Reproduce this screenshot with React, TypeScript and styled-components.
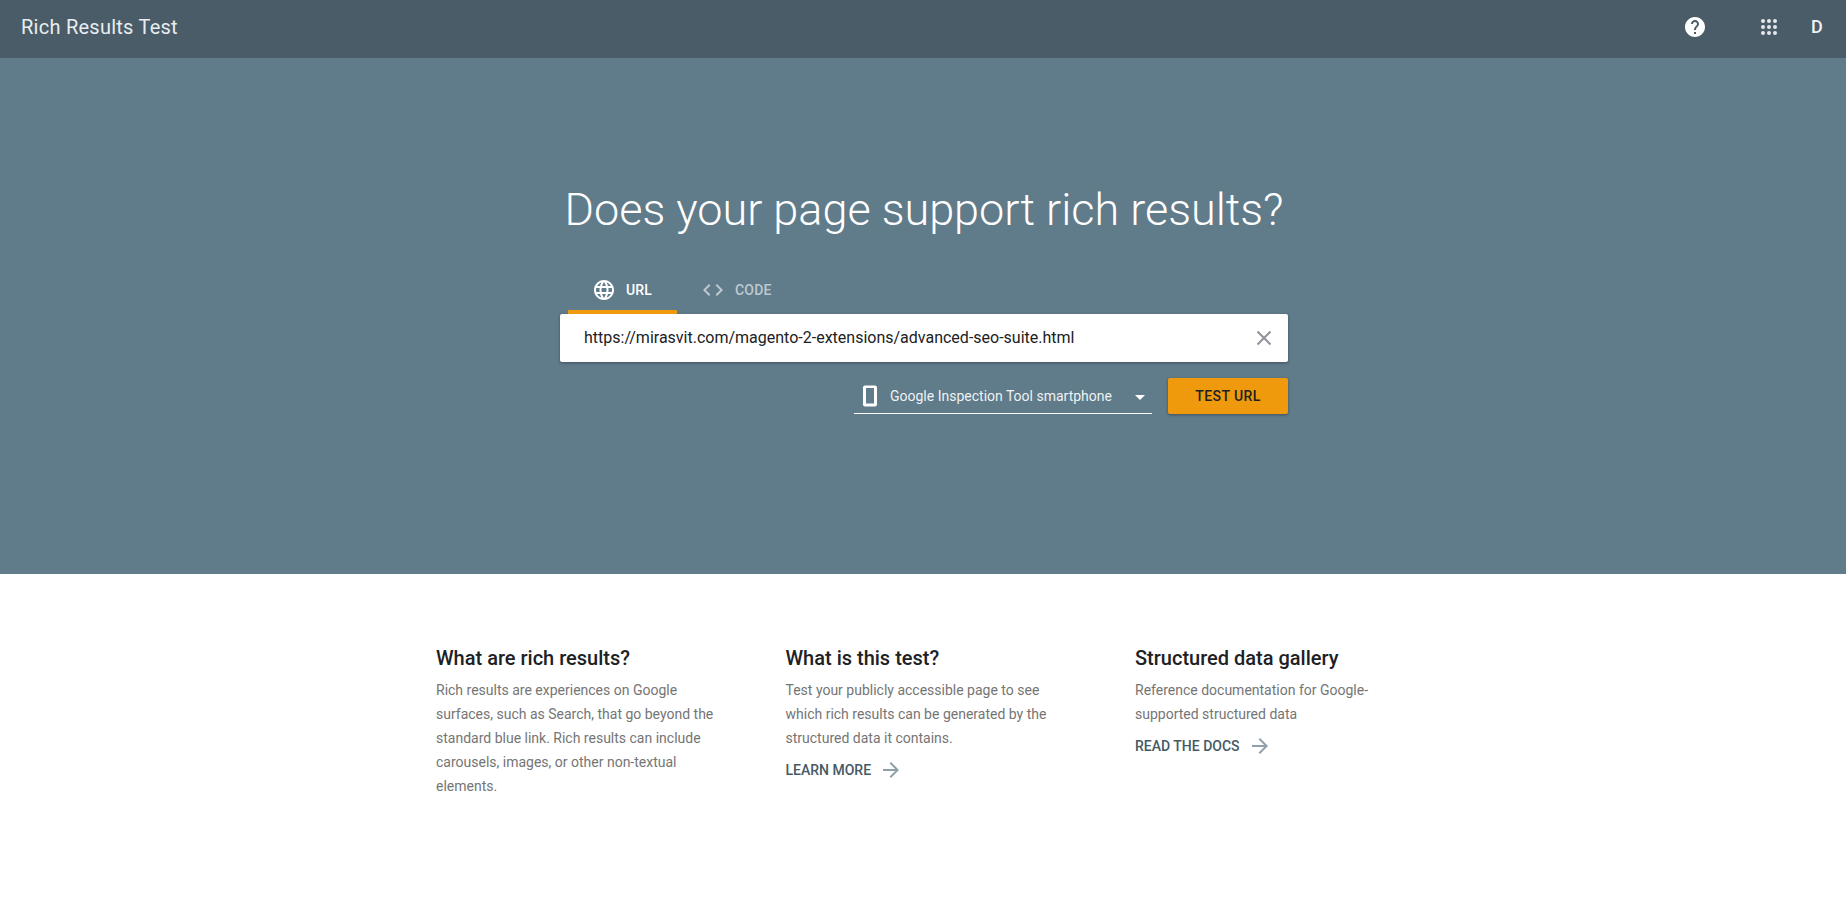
import React from "react";
import styled, { createGlobalStyle } from "styled-components";

const Global = createGlobalStyle`
  html, body { margin: 0; padding: 0; background: #fff; }
  body { font-family: Roboto, "Liberation Sans", sans-serif; }
  * { box-sizing: border-box; }
`;

const Page = styled.div`
  display: flex;
  flex-direction: column;
  height: 914px;
  overflow: hidden;
`;

const TopBar = styled.header`
  height: 58px;
  flex: none;
  display: flex;
  align-items: center;
  padding: 0 0 4px 21px;
  background: #4a5c67;
  color: #fff;
`;

const AppTitle = styled.div`
  font-size: 20px;
  font-weight: 400;
  letter-spacing: 0.25px;
  color: #e8edf0;
  flex: 1;
`;

const BarIcon = styled.svg<{ $mr: number }>`
  width: 24px;
  height: 24px;
  fill: #fff;
  margin-right: ${(p) => p.$mr}px;
`;

const Avatar = styled.div`
  width: 12px;
  font-size: 18px;
  font-weight: 500;
  line-height: 24px;
  text-align: center;
  color: #f1f3f4;
  margin-right: 23px;
`;

const Hero = styled.section`
  height: 516px;
  flex: none;
  background: #607b8a;
  display: flex;
  flex-direction: column;
  align-items: center;
  padding: 122px 0 0 2px;
`;

const Headline = styled.h1`
  margin: 0;
  font-size: 45px;
  line-height: 60px;
  font-weight: 300;
  color: #fff;
`;

const Panel = styled.div`
  width: 728px;
  margin-top: 22px;
`;

const Tabs = styled.div`
  display: flex;
  padding-left: 8px;
  height: 52px;
`;

const Tab = styled.div<{ $active?: boolean }>`
  width: 109px;
  display: flex;
  align-items: center;
  gap: 10px;
  padding: 8px 0 0 24px;
  font-size: 14px;
  font-weight: 500;
  letter-spacing: 0.2px;
  color: ${(p) => (p.$active ? "#fff" : "rgba(255,255,255,0.6)")};
  border-bottom: 4px solid ${(p) => (p.$active ? "#ef9a0c" : "transparent")};
  svg {
    width: 24px;
    height: 24px;
    fill: currentColor;
    flex: none;
  }
`;

const InputCard = styled.div`
  height: 48px;
  display: flex;
  align-items: center;
  justify-content: space-between;
  padding: 0 15px 0 24px;
  background: #fff;
  border-radius: 2px;
  box-shadow: 0 1px 3px rgba(0, 0, 0, 0.35);
  font-size: 16px;
  color: #202124;
`;

const InputText = styled.span`
  padding-bottom: 2px;
`;

const ClearIcon = styled.svg`
  width: 18px;
  height: 18px;
  stroke: #8f9499;
  stroke-width: 2;
  fill: none;
`;

const Actions = styled.div`
  display: flex;
  justify-content: flex-end;
  align-items: flex-start;
  gap: 16px;
  margin-top: 16px;
`;

const Select = styled.div`
  width: 298px;
  height: 36px;
  display: flex;
  align-items: center;
  padding: 0 0 0 4px;
  border-bottom: 1px solid #fff;
  color: rgba(255, 255, 255, 0.92);
  font-size: 14px;
`;

const PhoneIcon = styled.svg`
  width: 24px;
  height: 24px;
  fill: #fff;
  flex: none;
  margin-right: 8px;
`;

const SelectText = styled.span`
  flex: 1;
`;

const Caret = styled.span`
  width: 0;
  height: 0;
  margin: 4px 7px 0 0;
  border-left: 5px solid transparent;
  border-right: 5px solid transparent;
  border-top: 5px solid #fff;
`;

const TestButton = styled.button`
  width: 120px;
  height: 36px;
  border: 0;
  border-radius: 2px;
  background: #ef9a0c;
  box-shadow: 0 1px 3px rgba(0, 0, 0, 0.35);
  color: #202124;
  font-family: inherit;
  font-size: 14px;
  font-weight: 500;
  letter-spacing: 0.4px;
`;

const Info = styled.section`
  display: grid;
  grid-template-columns: repeat(3, 349.5px);
  padding: 69px 0 0 436px;
`;

const Column = styled.div`
  width: 285px;
`;

const ColumnTitle = styled.h2`
  margin: 0 0 5px;
  font-size: 20px;
  line-height: 30px;
  font-weight: 500;
  color: #202124;
`;

const ColumnText = styled.p`
  margin: 0;
  font-size: 14px;
  line-height: 24px;
  color: #757575;
`;

const MoreLink = styled.a`
  display: flex;
  align-items: center;
  height: 24px;
  font-size: 14px;
  font-weight: 500;
  color: #455a64;
  margin-top: 8px;
  svg {
    width: 24px;
    height: 24px;
    fill: #90a0a9;
    margin-left: 8px;
  }
`;

const Arrow = () => (
  <svg viewBox="0 0 24 24">
    <path d="M12 4l-1.41 1.41L16.17 11H4v2h12.17l-5.58 5.59L12 20l8-8z" />
  </svg>
);

export default function App() {
  return (
    <Page>
      <Global />
      <TopBar>
        <AppTitle>Rich Results Test</AppTitle>
        <BarIcon $mr={50} viewBox="0 0 24 24">
          <path d="M12 2C6.48 2 2 6.48 2 12s4.48 10 10 10 10-4.48 10-10S17.52 2 12 2zm1 17h-2v-2h2v2zm2.07-7.75l-.9.92C13.45 12.9 13 13.5 13 15h-2v-.5c0-1.1.45-2.1 1.17-2.83l1.24-1.26c.37-.36.59-.86.59-1.41 0-1.1-.9-2-2-2s-2 .9-2 2H8c0-2.21 1.79-4 4-4s4 1.79 4 4c0 .88-.36 1.68-.93 2.25z" />
        </BarIcon>
        <BarIcon $mr={30} viewBox="0 0 24 24">
          <g fill="#e4e8ea">
            {[6, 12, 18].flatMap((y) =>
              [6, 12, 18].map((x) => <circle key={`${x}-${y}`} cx={x} cy={y} r={2} />)
            )}
          </g>
        </BarIcon>
        <Avatar>D</Avatar>
      </TopBar>
      <Hero>
        <Headline>Does your page support rich results?</Headline>
        <Panel>
          <Tabs>
            <Tab $active>
              <svg viewBox="0 0 24 24">
                <path d="M11.99 2C6.47 2 2 6.48 2 12s4.47 10 9.99 10C17.52 22 22 17.52 22 12S17.52 2 11.99 2zm6.93 6h-2.95c-.32-1.25-.78-2.45-1.38-3.56 1.84.63 3.37 1.91 4.33 3.56zM12 4.04c.83 1.2 1.48 2.53 1.91 3.96h-3.82c.43-1.43 1.08-2.76 1.91-3.96zM4.26 14C4.1 13.36 4 12.69 4 12s.1-1.36.26-2h3.38c-.08.66-.14 1.32-.14 2 0 .68.06 1.34.14 2H4.26zm.82 2h2.95c.32 1.25.78 2.45 1.38 3.56-1.84-.63-3.37-1.9-4.33-3.56zm2.95-8H5.08c.96-1.66 2.49-2.93 4.33-3.56C8.81 5.55 8.35 6.75 8.03 8zM12 19.96c-.83-1.2-1.48-2.53-1.91-3.96h3.82c-.43 1.43-1.08 2.76-1.91 3.96zM14.34 14H9.66c-.09-.66-.16-1.32-.16-2 0-.68.07-1.35.16-2h4.68c.09.65.16 1.32.16 2 0 .68-.07 1.34-.16 2zm.25 5.56c.6-1.11 1.06-2.31 1.38-3.56h2.95c-.96 1.65-2.49 2.93-4.33 3.56zM16.36 14c.08-.66.14-1.32.14-2 0-.68-.06-1.34-.14-2h3.38c.16.64.26 1.31.26 2s-.1 1.36-.26 2h-3.38z" />
              </svg>
              URL
            </Tab>
            <Tab>
              <svg viewBox="0 0 24 24">
                <path d="M9.4 16.6L4.8 12l4.6-4.6L8 6l-6 6 6 6 1.4-1.4zm5.2 0l4.6-4.6-4.6-4.6L16 6l6 6-6 6-1.4-1.4z" />
              </svg>
              CODE
            </Tab>
          </Tabs>
          <InputCard>
            <InputText>https://mirasvit.com/magento-2-extensions/advanced-seo-suite.html</InputText>
            <ClearIcon viewBox="0 0 18 18">
              <path d="M2.5 2.500l13 13M15.500 2.500l-13 13" />
            </ClearIcon>
          </InputCard>
          <Actions>
            <Select>
              <PhoneIcon viewBox="0 0 24 24">
                <path d="M17 1.500H7c-1.100 0-2 .9-2 2v17c0 1.100.9 2 2 2h10c1.100 0 2-.9 2-2v-17c0-1.100-.9-2-2-2zM16 19.500H8V4h8v15.500z" />
              </PhoneIcon>
              <SelectText>Google Inspection Tool smartphone</SelectText>
              <Caret />
            </Select>
            <TestButton>TEST URL</TestButton>
          </Actions>
        </Panel>
      </Hero>
      <Info>
        <Column>
          <ColumnTitle>What are rich results?</ColumnTitle>
          <ColumnText>
            Rich results are experiences on Google surfaces, such as Search, that go beyond the
            standard blue link. Rich results can include carousels, images, or other non-textual
            elements.
          </ColumnText>
        </Column>
        <Column>
          <ColumnTitle>What is this test?</ColumnTitle>
          <ColumnText>
            Test your publicly accessible page to see which rich results can be generated by the
            structured data it contains.
          </ColumnText>
          <MoreLink>
            LEARN MORE
            <Arrow />
          </MoreLink>
        </Column>
        <Column>
          <ColumnTitle>Structured data gallery</ColumnTitle>
          <ColumnText>
            Reference documentation for Google-supported structured data
          </ColumnText>
          <MoreLink>
            READ THE DOCS
            <Arrow />
          </MoreLink>
        </Column>
      </Info>
    </Page>
  );
}
